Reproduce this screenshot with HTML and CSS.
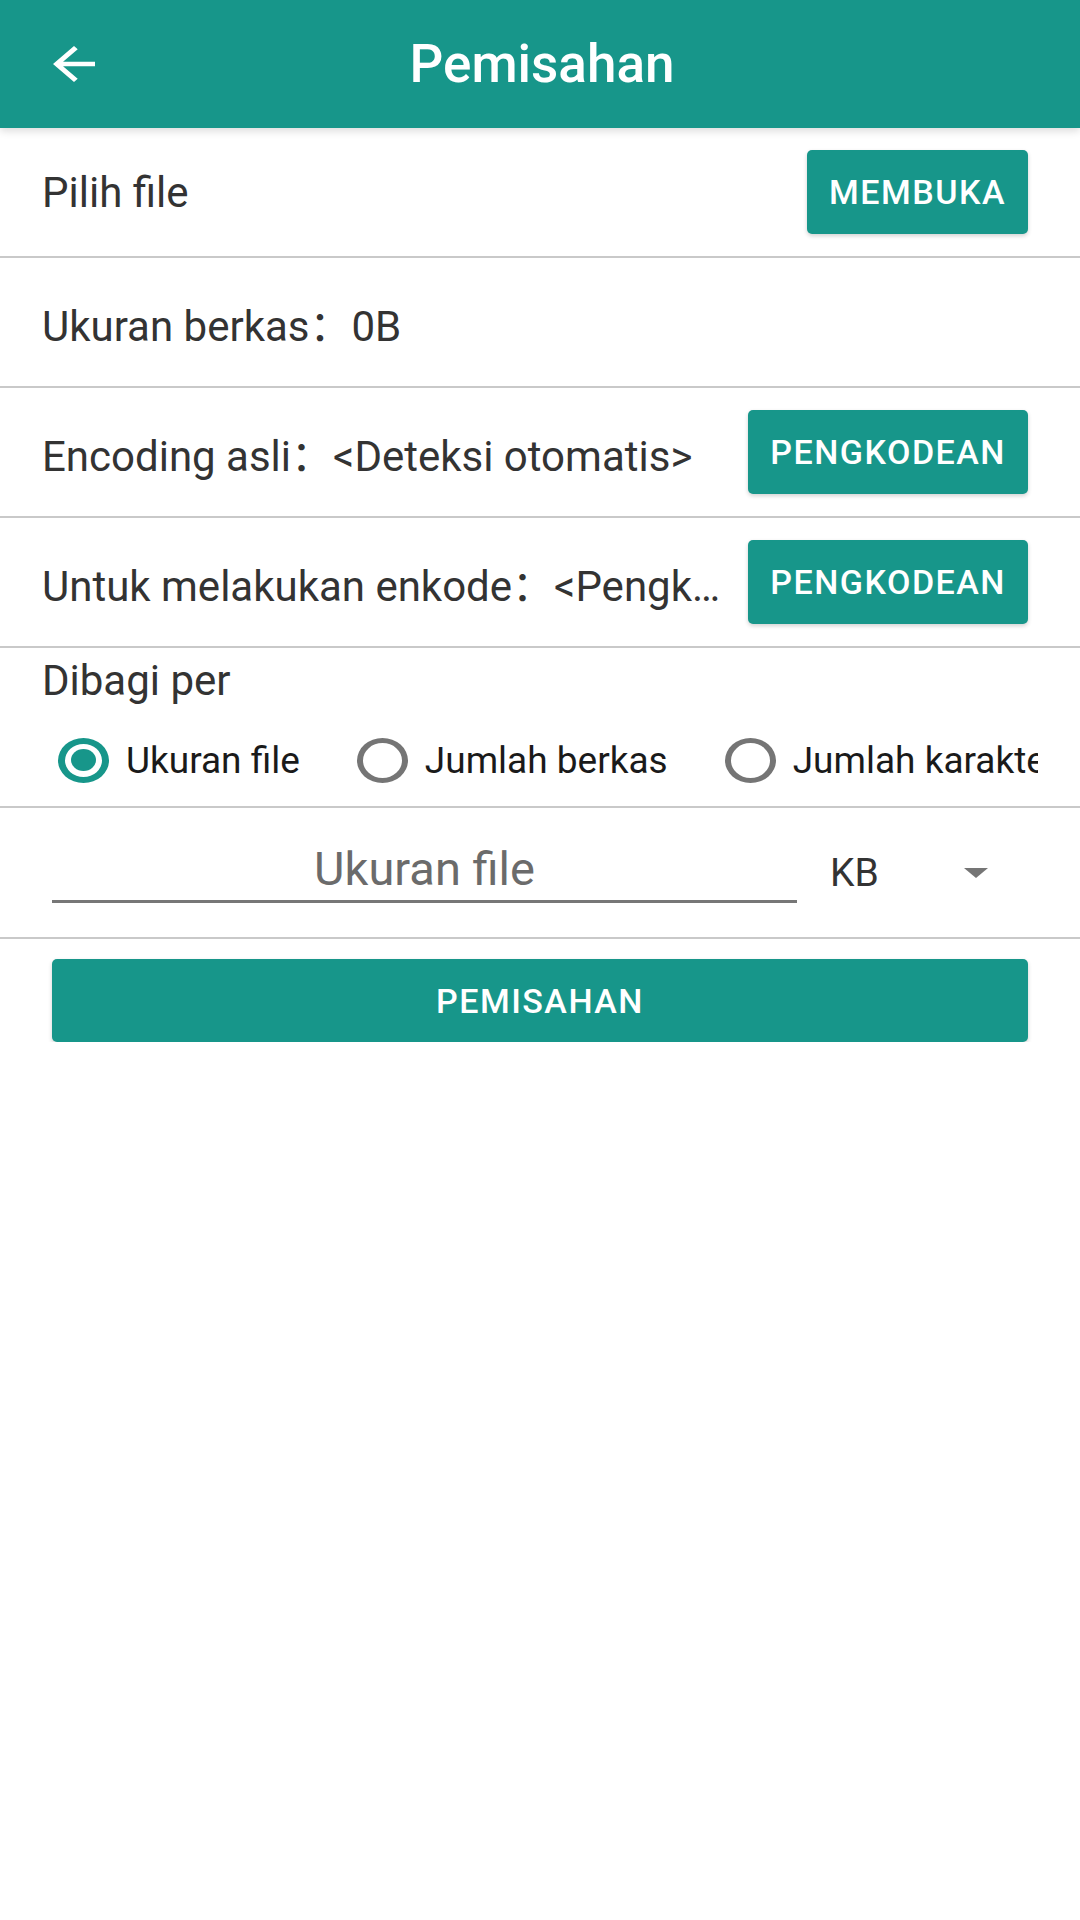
FILE: index.html
```html
<!DOCTYPE html>
<html lang="id">
<head>
    <meta charset="UTF-8" />
    <meta name="viewport" content="width=device-width, initial-scale=1.0" />
    <title>Pemisahan</title>
    <link rel="stylesheet" href="styles.css">
</head>
<body>
    <header class="toolbar">
        <div class="toolbar-left">
            <svg class="back-icon" viewBox="4 4 16 16" preserveAspectRatio="none" width="42" height="36">
                <path d="M20 11H7.83l5.59-5.59L12 4l-8 8 8 8 1.41-1.41L7.83 13H20v-2z" fill="#fff"/>
            </svg>
        </div>
        <h1 class="title">Pemisahan</h1>
        <div></div>
    </header>

    <div class="row">
        <span class="row-text">Pilih file</span>
        <button class="btn">Membuka</button>
    </div>

    <div class="row">
        <span class="row-text">Ukuran berkas：0B</span>
    </div>

    <div class="row">
        <span class="row-text">Encoding asli：&lt;Deteksi otomatis&gt;</span>
        <button class="btn">Pengkodean</button>
    </div>

    <div class="row">
        <span class="row-text">Untuk melakukan enkode：&lt;Pengkodean asli&gt;</span>
        <button class="btn">Pengkodean</button>
    </div>

    <div class="split-section">
        <div class="section-label">Dibagi per</div>
        <div class="radio-group">
            <label class="radio-item">
                <span class="radio on"><span class="dot"></span></span>
                <span class="radio-label">Ukuran file</span>
            </label>
            <label class="radio-item">
                <span class="radio"></span>
                <span class="radio-label">Jumlah berkas</span>
            </label>
            <label class="radio-item">
                <span class="radio"></span>
                <span class="radio-label">Jumlah karakter</span>
            </label>
        </div>
    </div>

    <div class="size-row">
        <input type="text" class="size-input" placeholder="Ukuran file" />
        <div class="spinner">
            <span class="spinner-value">KB</span>
            <span class="spinner-arrow"></span>
        </div>
    </div>

    <button class="btn btn-wide">Pemisahan</button>
</body>
</html>
```

FILE: styles.css
```css
body {
    margin: 0;
    background: #fff;
    font-family: Roboto, "Noto Sans CJK SC", sans-serif;
    color: #333;
}
.toolbar {
    display: grid;
    grid-template-columns: 1fr auto 1fr;
    align-items: center;
    height: 128px;
    background-color: #17968a;
    box-shadow: 0 3px 8px rgba(0,0,0,0.14);
    position: relative;
}
.toolbar-left {
    padding-left: 53px;
    display: flex;
}
.title {
    margin: 0;
    color: #fff;
    font-size: 53px;
    font-weight: 500;
    padding-left: 4px;
}
.row {
    display: flex;
    align-items: center;
    height: 128px;
    padding: 0 52px 0 42px;
    border-bottom: 2px solid #c9c9c9;
}
.row-text {
    flex: 1;
    min-width: 0;
    font-size: 42px;
    white-space: nowrap;
    overflow: hidden;
    text-overflow: ellipsis;
    margin-right: 26px;
}
.btn {
    flex: none;
    height: 84px;
    padding: 0 22px;
    border: none;
    border-radius: 5px;
    background-color: #17968a;
    color: #fff;
    font-family: Roboto, sans-serif;
    font-size: 34px;
    font-weight: 500;
    letter-spacing: 1.5px;
    text-transform: uppercase;
    box-shadow: 0 2px 4px rgba(0,0,0,0.18);
}
.split-section {
    padding: 8px 0 16px 42px;
    border-bottom: 2px solid #c9c9c9;
}
.section-label {
    font-size: 42px;
    line-height: 49px;
}
.radio-group {
    display: flex;
    gap: 57px;
    margin: 25px 42px 0 16px;
    height: 60px;
    overflow: hidden;
}
.radio-item {
    display: flex;
    align-items: center;
    gap: 17px;
    flex: none;
}
.radio {
    width: 51px;
    height: 45px;
    box-sizing: border-box;
    border-radius: 50%;
    border-style: solid;
    border-width: 5px 6px;
    border-color: #757575;
    display: flex;
    align-items: center;
    justify-content: center;
}
.radio.on {
    border-color: #17968a;
    border-width: 6px 7px;
}
.dot {
    width: 25px;
    height: 22px;
    border-radius: 50%;
    background-color: #17968a;
}
.radio-label {
    font-size: 37px;
    color: #1a1a1a;
    white-space: nowrap;
}
.size-row {
    display: flex;
    align-items: center;
    height: 129px;
    padding: 0 92px 0 52px;
    border-bottom: 2px solid #c9c9c9;
}
.size-input {
    flex: none;
    width: 745px;
    height: 60px;
    box-sizing: border-box;
    padding: 0 0 6px;
    border: none;
    border-bottom: 3px solid #777;
    background: transparent;
    outline: none;
    font-family: Roboto, sans-serif;
    font-size: 47px;
    text-align: center;
    color: #333;
}
.size-input::placeholder {
    color: #6b6b6b;
}
.spinner {
    flex: 1;
    display: flex;
    align-items: center;
    justify-content: space-between;
    margin-left: 33px;
}
.spinner-value {
    font-size: 39px;
    color: #333;
}
.spinner-arrow {
    width: 0;
    height: 0;
    border-left: 12px solid transparent;
    border-right: 12px solid transparent;
    border-top: 10px solid #757575;
}
.btn-wide {
    display: block;
    width: 976px;
    height: 83px;
    margin: 20px 0 0 52px;
}
```
